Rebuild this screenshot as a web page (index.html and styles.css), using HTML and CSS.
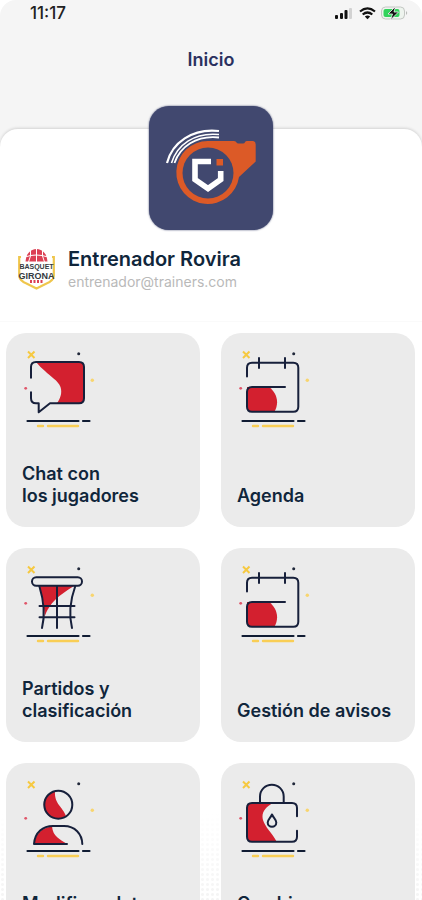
FILE: index.html
```html
<!DOCTYPE html>
<html lang="es">
<head>
<meta charset="utf-8">
<meta name="viewport" content="width=device-width, initial-scale=1">
<title>Inicio</title>
<link rel="stylesheet" href="styles.css">
</head>
<body>
<svg class="sprite" aria-hidden="true">
  <symbol id="sparks" viewBox="0 0 76 84">
    <g fill="none" stroke-width="2">
      <path stroke="#f6c940" d="M6 4.500l6.500 6.500M12.500 4.500L6 11"/>
      <path stroke="#101c33" stroke-width="2.200" stroke-linecap="round" d="M5.500 74H56.500M61 74H67.500"/>
      <path stroke="#f9ce55" stroke-width="2.400" stroke-linecap="round" d="M16 79H21M26 79H56"/>
    </g>
    <circle cx="56.700" cy="6.700" r="1.500" fill="#20283a"/>
    <circle cx="70.300" cy="33.300" r="1.700" fill="#f8d56f"/>
    <circle cx="3.700" cy="41.300" r="1.400" fill="#e0566a"/>
  </symbol>
  <symbol id="chat" viewBox="0 0 76 84">
    <path fill="#d3202f" d="M14 15H58Q62 15 62 19V52Q62 56.300 58 56.300H35C38 52 40.500 46 38.500 40C36.500 34 28 29 23 24Q18 20 14 15Z"/>
    <path class="line" d="M9 30.700V20Q9 15 14 15H57Q62 15 62 20V51.300Q62 56.300 57 56.300H28L16.700 65.300V56.300H14Q9 56.300 9 51.300V45.300"/>
  </symbol>
  <symbol id="calendar" viewBox="0 0 76 84">
    <path fill="#d3202f" d="M10 40H32C39 45 43 55 37.500 64.700H14Q10 64.700 10 60Z"/>
    <path class="line" d="M10 29.500V20.700Q10 15.700 15 15.700H56.300Q61.300 15.700 61.300 20.700V59.700Q61.300 64.700 56.300 64.700H15Q10 64.700 10 59.700V45Q10 40 15 40H48M22 11V21M48 11V21"/>
  </symbol>
  <symbol id="basket" viewBox="0 0 76 84">
    <path fill="#d3202f" d="M17.300 24H52C44 29 38 33 34 37C28 43 25 48 22.500 55C22.500 42 20 33 17.300 24Z"/>
    <path class="line thin" d="M35 24V66M17.500 44H52.500M17.500 55.300H52.500"/>
    <path class="line" d="M17.300 24C21 36 24 50 20 66M53.300 24C49 36 46 50 50 66"/>
    <rect class="line" x="10" y="15.300" width="50" height="8.400" rx="4.200"/>
  </symbol>
  <symbol id="user" viewBox="0 0 76 84">
    <path fill="#d3202f" d="M33 14A14 14 0 1 0 44 39C41 30 32 27 33 14ZM12 67C14 57 19 51 30 49.500C31 60 38 62 45 67Z"/>
    <circle class="line" cx="36.300" cy="27.700" r="14"/>
    <path class="line" d="M45 67H12C13 55 21 49 31 49H42C53 49 60 57 60.300 67"/>
  </symbol>
  <symbol id="lock" viewBox="0 0 76 84">
    <path fill="#d3202f" d="M14 26H36.300C28 30 24 36 26 43C28 50 35 56 39.700 64.700H14Q10 64.700 10 60V30Q10 26 14 26Z"/>
    <path class="line" d="M60 39.300V31Q60 26 55 26H15Q10 26 10 31V59.700Q10 64.700 15 64.700H55Q60 64.700 60 59.700V53.700"/>
    <path class="line thin" d="M23 26V19.500a11.850 11.850 0 0 1 23.700 0V26M35 37.500C33.500 41 30.700 42.500 30.700 45.500a4.300 4.300 0 0 0 8.600 0C39.300 42.500 36.500 41 35 37.500Z"/>
  </symbol>
</svg>

<div class="app">
  <div class="status">
    <span class="time">11:17</span>
    <svg width="74" height="16" viewBox="0 0 74 16" aria-hidden="true">
      <g fill="#111">
        <rect x="1" y="10" width="3" height="4" rx="1"/>
        <rect x="6" y="8" width="3" height="6" rx="1"/>
        <rect x="10.500" y="5" width="3" height="9" rx="1"/>
      </g>
      <rect x="15" y="3" width="3" height="11" rx="1" fill="#d2d2d2"/>
      <g fill="none" stroke="#111" stroke-width="2.200">
        <path d="M26 6.500Q33.500 .300 41 6.500M28.700 9.500Q33.500 5.500 38.300 9.500"/>
      </g>
      <path fill="#111" d="M30.800 11.400Q33.500 9.400 36.200 11.400L33.500 14.200Z"/>
      <rect x="47.500" y="2" width="23" height="12" rx="4" fill="#eef4ee" stroke="#c3c7c3"/>
      <rect x="49.500" y="4" width="16" height="8" rx="2" fill="#32d35c"/>
      <path fill="#b9bdb9" d="M72 6q2.500 2 0 4z"/>
      <path fill="#111" stroke="#f5f5f5" stroke-width=".8" d="M61.500 1.500L54 9H58.500L56.500 15L64.500 7H60Z"/>
    </svg>
  </div>

  <header class="topbar"><h1>Inicio</h1></header>

  <main class="sheet">
    <section class="profile">
      <svg class="logo" viewBox="0 0 124 124" role="img" aria-label="Logotipo">
        <path fill="#dc5a27" d="M59 35H85Q87 35 87.500 36.500Q88 37.500 89.500 37.500H94Q95.500 37.500 96 36.300Q96.500 35 98 35H103.500Q106.700 35 106.700 38.500V55.500L90 71A31.500 31.500 0 1 1 59 35Z"/>
        <circle cx="59" cy="67" r="25.500" fill="#41486f"/>
        <path fill="none" stroke="#fff" stroke-width="5.600" d="M62 55.500H46V73.500L59 82.500L71.700 73.500V65"/>
        <rect x="67.500" y="53" width="6.500" height="6.500" fill="#dc5a27"/>
        <g fill="none" stroke="#fff">
          <path stroke-width="2.200" d="M18 57C23 37 43 22 70 25"/>
          <path stroke-width="1.600" d="M22.500 57C28 39 45 26 70 28.500"/>
          <path stroke-width="1.800" d="M25.500 57C31 41 47 29 70 31.500"/>
        </g>
      </svg>
      <div class="person">
        <svg class="club" viewBox="0 0 40 44" role="img" aria-label="Bàsquet Girona">
          <path fill="none" stroke="#efc64c" stroke-width="2.200" d="M5 10H3.200V29Q4 34 10.500 36.500L20.500 41.500L30.500 36.500Q37 34 37.800 29V10H36"/>
          <path fill="#dc4054" d="M9.500 14.500A11 12.500 0 0 1 31.500 14.500Z"/>
          <path fill="none" stroke="#fff" stroke-width="1" d="M20.500 1V15M9 10Q20 6 32 10M14.500 3Q15.500 9 12.500 15M26.500 3Q25.500 9 28.500 15"/>
          <path fill="#fff" d="M5 15H36V32H5Z"/>
          <text x="20.500" y="21.500" font-size="7">BASQUET</text>
          <text x="20.500" y="31.500" font-size="9">GIRONA</text>
          <path stroke="#dc4054" stroke-width="3" stroke-dasharray="2 1.500" d="M14 34.500H27"/>
        </svg>
        <div>
          <h2>Entrenador Rovira</h2>
          <p>entrenador@trainers.com</p>
        </div>
      </div>
    </section>

    <nav class="menu">
      <a class="card" href="#mensajes"><svg class="icon" aria-hidden="true"><use href="#sparks"/><use href="#chat"/></svg><span>Chat con<br>los jugadores</span></a>
      <a class="card" href="#agenda"><svg class="icon" aria-hidden="true"><use href="#sparks"/><use href="#calendar"/></svg><span>Agenda</span></a>
      <a class="card" href="#partidos"><svg class="icon" aria-hidden="true"><use href="#sparks"/><use href="#basket"/></svg><span>Partidos y<br>clasificación</span></a>
      <a class="card" href="#avisos"><svg class="icon" aria-hidden="true"><use href="#sparks"/><use href="#calendar"/></svg><span>Gestión de avisos</span></a>
      <a class="card" href="#datos"><svg class="icon" aria-hidden="true"><use href="#sparks"/><use href="#user"/></svg><span>Modificar datos<br>personales</span></a>
      <a class="card" href="#clave"><svg class="icon" aria-hidden="true"><use href="#sparks"/><use href="#lock"/></svg><span>Cambiar<br>contraseña</span></a>
    </nav>
  </main>
</div>
</body>
</html>
```
FILE: styles.css
```css
* { box-sizing: border-box; }

body {
  margin: 0;
  background: #fff;
  font-family: Inter, "Liberation Sans", sans-serif;
  color: #10263b;
}

h1, h2, p { margin: 0; }

.sprite { display: none; }

.app {
  height: 100vh;
  overflow: hidden;
  border-radius: 16px 16px 0 0;
  background: #f5f5f5;
}

.status {
  display: flex;
  justify-content: space-between;
  align-items: center;
  height: 26px;
  padding: 0 14px 0 30px;
}

.time {
  font-size: 17px;
  font-weight: 500;
  color: #222;
}

.topbar {
  display: flex;
  justify-content: center;
  align-items: center;
  height: 68px;
  margin-bottom: 35px;
}

.topbar h1 {
  font-size: 18px;
  line-height: 22px;
  font-weight: 600;
  color: #2b3160;
}

.sheet {
  border-radius: 18px 18px 0 0;
  background: #fff;
  box-shadow: 0 -1px 3px rgba(0, 0, 0, 0.14);
}

.profile {
  display: flex;
  flex-direction: column;
  align-items: center;
  border-bottom: 1px solid #fafafa;
  padding-bottom: 29px;
}

.logo {
  width: 124px;
  height: 124px;
  margin-top: -23px;
  border-radius: 20px;
  background: #41486f;
  box-shadow: 0 0 2px #41486f;
}

.person {
  display: flex;
  align-items: center;
  gap: 12px;
  width: 100%;
  padding: 16px 16px 0;
}

.club {
  width: 40px;
  height: 44px;
}

.club text {
  font-family: "Liberation Sans", sans-serif;
  font-weight: 700;
  text-anchor: middle;
  fill: #343a42;
}

.person h2 {
  font-size: 20px;
  line-height: 26px;
  font-weight: 600;
}

.person p {
  font-size: 14px;
  line-height: 20px;
  color: #b9b9b9;
}

.menu {
  display: grid;
  grid-template-columns: 1fr 1fr;
  gap: 21px;
  padding: 11px 7px 21px 6px;
  background:
    linear-gradient(#fff 490px, transparent 620px),
    radial-gradient(circle, #efefef 1px, transparent 2px) 0 0 / 5px 5px,
    #fff;
}

.card {
  display: flex;
  flex-direction: column;
  justify-content: space-between;
  aspect-ratio: 1;
  padding: 14px 16px 20px;
  border-radius: 20px;
  background: #ebebeb;
  color: inherit;
  text-decoration: none;
  font-size: 18px;
  line-height: 22px;
  font-weight: 600;
}

.icon {
  width: 76px;
  height: 84px;
}

.line {
  fill: none;
  stroke: #17203b;
  stroke-width: 2px;
  stroke-linecap: round;
  stroke-linejoin: round;
}
```
